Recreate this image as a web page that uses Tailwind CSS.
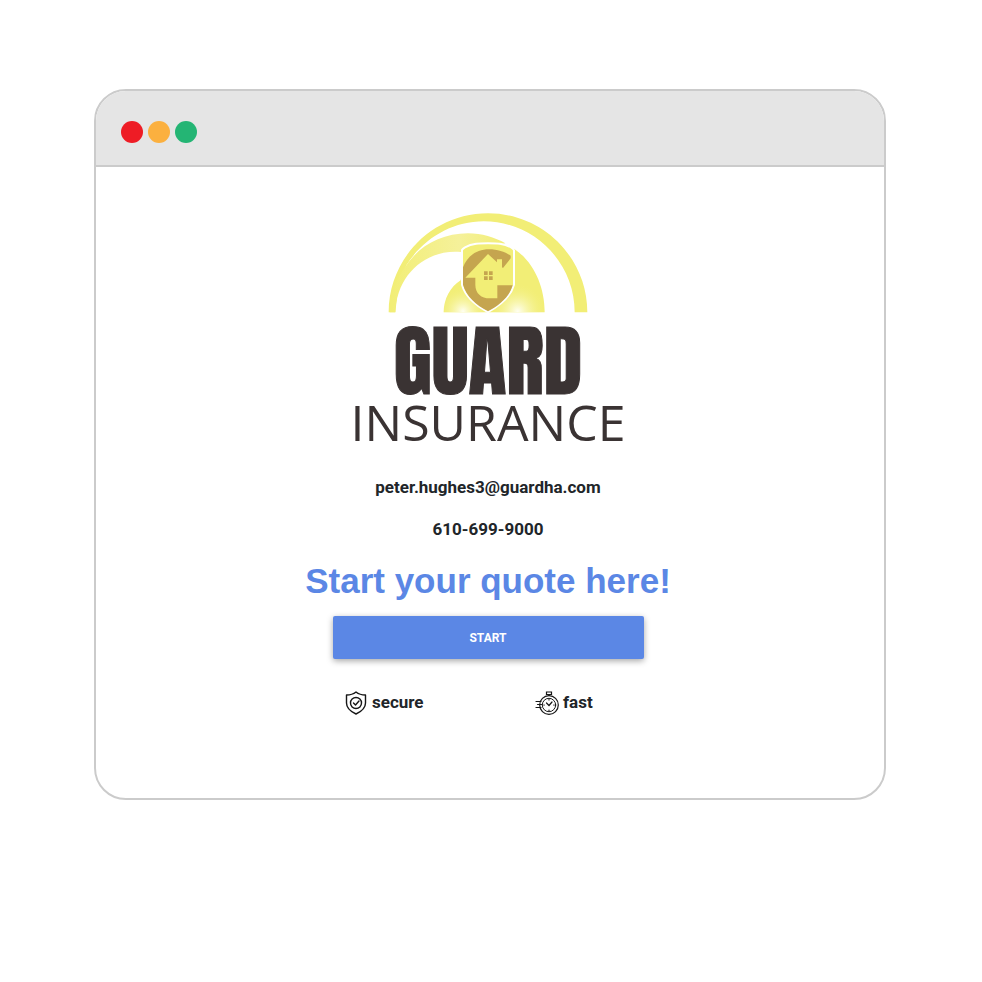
<!DOCTYPE html>
<html lang="en">
<head>
<meta charset="utf-8">
<meta name="viewport" content="width=device-width, initial-scale=1">
<title>Guard Insurance</title>
<script src="https://cdn.jsdelivr.net/npm/@tailwindcss/browser@4"></script>
</head>
<body class="bg-white py-[89px] pr-24 pl-[94px] font-['Roboto',sans-serif] text-[#212529]">
<div class="overflow-hidden rounded-[32px] border-2 border-[#cbcbcb] bg-white">
  <header class="flex h-[76px] items-center gap-[5px] border-b-2 border-[#cbcbcb] bg-[#e5e5e5] px-[25px] pt-2">
    <span class="size-[22px] rounded-full bg-[#ee1c25]"></span>
    <span class="size-[22px] rounded-full bg-[#fbb03f]"></span>
    <span class="size-[22px] rounded-full bg-[#24b574]"></span>
  </header>
  <main class="flex flex-col items-center pt-[46px] pr-1 pb-[83px]">
    <svg class="h-[100px] w-[200px]" viewBox="25 23 600 300" role="img" aria-label="Guard Insurance emblem">
      <defs>
        <radialGradient id="glowLeft" gradientUnits="userSpaceOnUse" cx="250" cy="318" r="75"><stop offset="0" stop-color="#fffff2"/><stop offset="1" stop-color="#f2ee76" stop-opacity="0"/></radialGradient>
        <radialGradient id="glowRight" gradientUnits="userSpaceOnUse" cx="414" cy="318" r="85"><stop offset="0" stop-color="#fffff2"/><stop offset="1" stop-color="#f2ee76" stop-opacity="0"/></radialGradient>
        <linearGradient id="sweep" x1="0" x2="1"><stop offset="0" stop-color="#f2ee76"/><stop offset=".6" stop-color="#f5f19a"/><stop offset="1" stop-color="#f2ee76"/></linearGradient>
      </defs>
      <path fill="#f2ee76" d="M27 321C27 157 160 24 325 24S623 157 623 321H585C585 170 463 48 312 48C215 48 129 102 80 180L55 250L47 321Z"/>
      <path fill="url(#sweep)" d="M80 180C120 120 187 84 265 84C306 84 345 96 377 114L325 140H243C132 131 50 215 47 321H30C34 265 50 220 80 180Z"/>
      <path fill="#f2ee76" d="M192 321C192 282 212 244 243 225L260 140L403 130C460 168 495 240 495 321Z"/>
      <path fill="url(#glowLeft)" d="M192 321C192 282 212 244 243 225L325 240V321Z"/>
      <path fill="url(#glowRight)" d="M325 321V220L470 220C487 250 495 285 495 321Z"/>
      <path fill="#f2ee76" stroke="#fff" stroke-width="6" d="M247 134Q249 130 256 126C278 114 300 114 325 114S372 114 394 126Q402 130 403 135V238C393 275 362 300 325 320C288 300 257 275 247 238Z"/>
      <path fill="#c5a54f" d="M250 186C263 151 292 132 328 132C354 132 377 140 393 151V159L370 188L367 186V162H352V171L325 146L257 217H287V238C287 264 305 279 330 279H353V240H399C389 274 362 298 325 318C289 298 260 274 250 238Z"/>
      <path fill="#c5a54f" d="M313 198h11v11h-11zM328 198h11v11h-11zM313 213h11v11h-11zM328 213h11v11h-11z"/>
    </svg>
    <h1 class="flex flex-col items-center text-[#3a3333]">
      <span class="mt-[18px] mb-1.5 font-['Impact','Anton','Roboto_Condensed','Roboto',sans-serif] text-[78px] leading-[60px] font-normal [-webkit-text-stroke:1px_#3a3333]">GUARD</span>
      <span class="font-['Open_Sans',sans-serif] text-[50px] leading-[50px] font-normal">INSURANCE</span>
    </h1>
    <a href="mailto:peter.hughes3@guardha.com" class="mt-7 text-[17px] leading-6 font-bold">peter.hughes3@guardha.com</a>
    <a href="tel:610-699-9000" class="mt-[18px] text-[17px] leading-6 font-bold">610-699-9000</a>
    <h2 class="mt-4 font-['Liberation_Sans',sans-serif] text-[35px] leading-[48px] font-bold text-[#5b87e5]">Start your quote here!</h2>
    <button type="button" class="mt-[11px] h-[43px] w-[311px] max-w-full rounded-[2px] bg-[#5b87e5] text-[12px] font-bold text-white shadow-[0_2px_6px_rgba(0,0,0,0.35)]">START</button>
    <ul class="mt-[31px] grid w-[382px] max-w-full grid-cols-2 text-[17px] leading-6 font-bold">
      <li class="flex gap-1 pl-[47px]">
        <svg class="mt-px size-6" viewBox="0 0 24 24" fill="none" stroke="#161616" stroke-width="1.4" stroke-linecap="round" stroke-linejoin="round" aria-hidden="true"><path d="M12 1C9.500 3 6 4 2.500 4v8c0 5 4 8.500 9.500 11 5.500-2.500 9.500-6 9.500-11V4C18 4 14.500 3 12 1Z"/><circle cx="12" cy="12" r="5.500"/><path d="m9.500 12 2 2 3.500-4"/></svg>
        secure
      </li>
      <li class="flex gap-1 pl-[47px]">
        <svg class="mt-px size-6" viewBox="0 0 24 24" fill="none" stroke="#161616" stroke-width="1.200" stroke-linecap="round" aria-hidden="true"><circle cx="14" cy="14" r="9.300"/><circle cx="14" cy="14" r="6.700" stroke-width="1"/><path d="M11.500 1h5v2.500h-5zM14 3.500v1M1 10.500h5M2.500 13.500h4M1 16.500h5M11.500 12l2.500 2.500 3-3.500M14 8.500v.5M14 19v.5M8.800 14h.5M18.700 14h.5"/></svg>
        fast
      </li>
    </ul>
  </main>
</div>
</body>
</html>
